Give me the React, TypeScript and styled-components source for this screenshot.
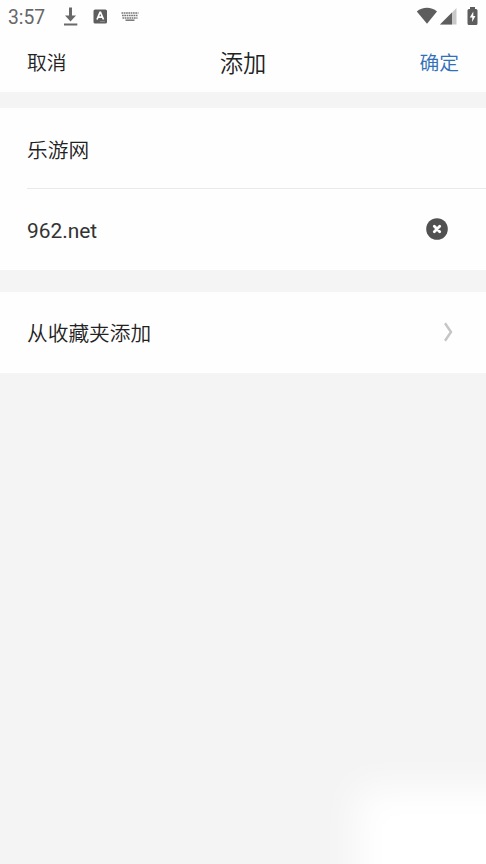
import React from "react";
import styled, { createGlobalStyle } from "styled-components";

const GlobalStyle = createGlobalStyle`
  * { box-sizing: border-box; }
  body { margin: 0; background: #f4f4f4; }
`;

const Screen = styled.main`
  position: relative;
  display: flex;
  flex-direction: column;
  width: 100%;
  height: 100vh;
  overflow: hidden;
  background: #f4f4f4;
  color: #2a2a2a;
  font-family: Roboto, "Noto Sans CJK SC", sans-serif;
`;

const StatusBar = styled.header`
  display: flex;
  justify-content: space-between;
  height: 33px;
  padding: 0 8px 1px;
  background: #fefefe;
`;

const StatusGroup = styled.div`
  display: flex;
  align-items: center;
`;

const Clock = styled.time`
  width: 54px;
  padding-top: 3px;
  font-size: 19.3px;
  line-height: 30px;
  color: #676767;
`;

const NavBar = styled.nav`
  display: grid;
  grid-template-columns: 1fr auto 1fr;
  align-items: center;
  height: 59px;
  padding: 2px 27px 0;
  background: #fefefe;
`;

const NavButton = styled.button<{ $primary?: boolean }>`
  justify-self: ${(p) => (p.$primary ? "end" : "start")};
  padding: 0;
  border: 0;
  background: none;
  font: inherit;
  font-size: 19.8px;
  font-weight: 350;
  line-height: 28px;
  color: ${(p) => (p.$primary ? "#3070b8" : "#222")};
`;

const Title = styled.h1`
  margin: 0;
  font-size: 23.3px;
  font-weight: 350;
  line-height: 34px;
  color: #222;
`;

const Group = styled.section<{ $gap: number }>`
  margin-top: ${(p) => p.$gap}px;
  padding-left: 27px;
  background: #fefefe;
`;

const Row = styled.div<{ $divided?: boolean; $inset?: number }>`
  display: flex;
  align-items: center;
  justify-content: space-between;
  height: 81px;
  padding-right: ${(p) => p.$inset ?? 27}px;
  border-bottom: ${(p) => (p.$divided ? "1px solid #e9e9e9" : "0")};
  font-size: 20.7px;
  line-height: 30px;
`;

const RowText = styled.span<{ $top?: number; $latin?: boolean }>`
  padding-top: ${(p) => p.$top ?? 2}px;
  font-size: ${(p) => (p.$latin ? 20.9 : 20.7)}px;
  font-weight: ${(p) => (p.$latin ? 400 : 350)};
  color: ${(p) => (p.$latin ? "#333" : "#222")};
`;

const Icon = styled.svg<{ $gap?: number; $lift?: number }>`
  display: block;
  flex: none;
  margin-left: ${(p) => p.$gap ?? 0}px;
  margin-bottom: ${(p) => p.$lift ?? 0}px;
`;

const CornerGlow = styled.div`
  position: absolute;
  left: 356px;
  top: 788px;
  width: 220px;
  height: 160px;
  background: #fff;
  filter: blur(19px);
  pointer-events: none;
`;

export default function App() {
  return (
    <Screen>
      <GlobalStyle />
      <CornerGlow />
      <StatusBar>
        <StatusGroup>
          <Clock>3:57</Clock>
          <Icon width="16" height="20" viewBox="0 0 16 20">
            <path d="M7 1.500h3v8h4l-5.5 6L3 9.500h4z" fill="#696969" />
            <path d="M2 18.500h13.3" stroke="#696969" strokeWidth="2" />
          </Icon>
          <Icon $gap={15} width="15" height="15" viewBox="0 0 15 15">
            <rect x=".5" y=".5" width="13.5" height="14" rx="1.6" fill="#5e5e5e" />
            <path d="M4 10.5 7 3.4h.5l3 7.1M5.2 8.2h4.2" fill="none" stroke="#fff" strokeWidth="1.7" />
            <path d="M7 12.6h5" stroke="#999" strokeWidth=".8" />
          </Icon>
          <Icon $gap={13} width="18" height="11" viewBox="0 0 18 11">
            <path d="M.5 2h17M1 4.5h16M1.5 7h15" stroke="#777" strokeWidth="1.5" strokeDasharray="1.7 .6" />
            <path d="M4.5 9.2h9" stroke="#777" strokeWidth="1.5" />
          </Icon>
        </StatusGroup>
        <StatusGroup>
          <Icon width="22" height="18" viewBox="0 0 22 18">
            <path d="M.8 4.4C6.5-.4 15.3-.4 21 4.4L11 16.8z" fill="#5d5d5d" />
          </Icon>
          <Icon $gap={2} width="17" height="17" viewBox="0 0 17 17">
            <path d="M0 16.5 16.5 0v16.5z" fill="#c8c8c8" />
            <path d="M0 16.5 12 4.5v12z" fill="#5d5d5d" />
          </Icon>
          <Icon $gap={10} $lift={1} width="11" height="18" viewBox="0 0 11 18">
            <path d="M3 0h5v2h1q1.5 0 1.5 1.5v13Q10.5 18 9 18H2Q.5 18 .5 16.5v-13Q.5 2 2 2h1z" fill="#5d5d5d" />
            <path d="M6.3 4.5 2.8 10.5h2.4v4.5l3.2-6H6.3z" fill="#fff" />
          </Icon>
        </StatusGroup>
      </StatusBar>
      <NavBar>
        <NavButton>取消</NavButton>
        <Title>添加</Title>
        <NavButton $primary>确定</NavButton>
      </NavBar>
      <Group $gap={16}>
        <Row $divided>
          <RowText $top={5}>乐游网</RowText>
        </Row>
        <Row $inset={38}>
          <RowText $latin>962.net</RowText>
          <Icon $lift={2} width="22" height="22" viewBox="0 0 22 22">
            <circle cx="11" cy="11" r="10.8" fill="#515151" />
            <path d="m8.3 8.3 5.4 5.4m0-5.4-5.4 5.4" stroke="#fff" strokeWidth="2.8" strokeLinecap="round" />
          </Icon>
        </Row>
      </Group>
      <Group $gap={22}>
        <Row $inset={32}>
          <RowText>从收藏夹添加</RowText>
          <Icon $lift={2} width="11" height="20" viewBox="0 0 11 20">
            <path d="m2 1.2 6 8.8-6 8.8" fill="none" stroke="#c5c5c5" strokeWidth="2.4" />
          </Icon>
        </Row>
      </Group>
    </Screen>
  );
}
